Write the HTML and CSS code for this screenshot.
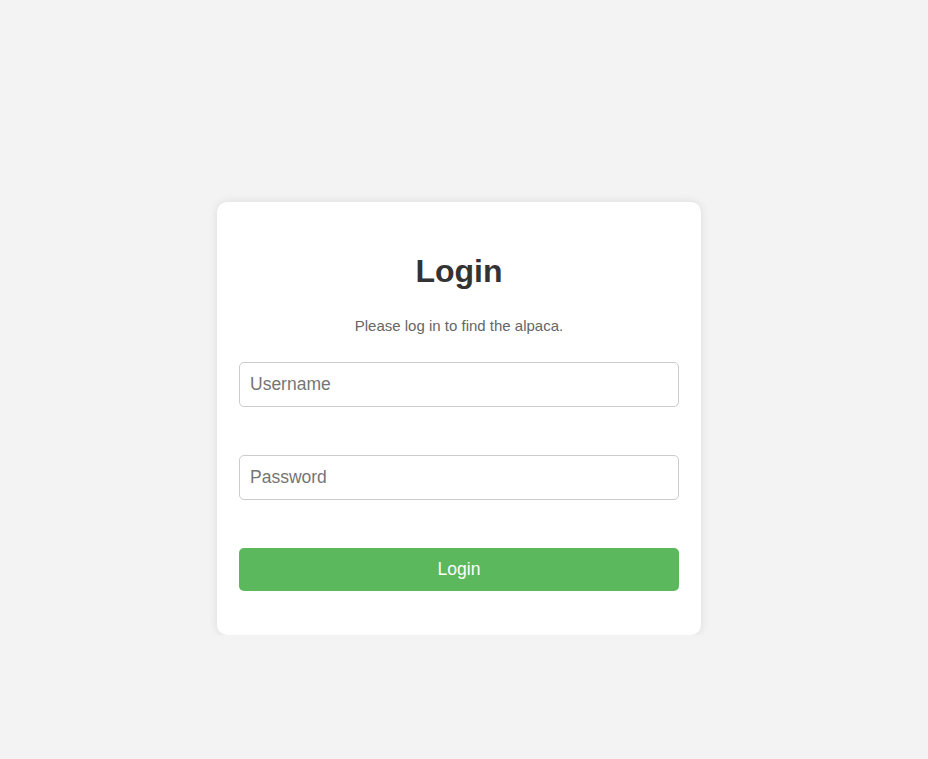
FILE: index.html
```html
<!DOCTYPE html>
<html lang="en">
<head>
  <meta charset="UTF-8">
  <meta name="viewport" content="width=device-width, initial-scale=1.0">
  <title>Login</title>
  <link rel="stylesheet" href="styles.css">
</head>
<body>
  <div class="login-box">
    <h1>Login</h1>
    <p class="hint">Please log in to find the alpaca.</p>
    <form id="loginForm">
      <input type="text" name="username" placeholder="Username">
      <input type="password" name="password" placeholder="Password">
      <button type="submit">Login</button>
    </form>
  </div>
</body>
</html>
```

FILE: styles.css
```css
body {
  margin: 0;
  padding-right: 10px;
  background-color: #f3f3f3;
  font-family: 'Liberation Sans', Arial, sans-serif;
}
.login-box {
  width: 440px;
  margin: 202px auto 0;
  padding: 30px 22px 44px;
  background-color: #fff;
  border-radius: 10px;
  box-shadow: 0 0 10px rgba(0, 0, 0, 0.1);
  text-align: center;
}
h1 {
  margin: 21px 0 27px;
  font-size: 32px;
  color: #333;
}
.hint {
  margin: 0 0 28px;
  font-size: 15px;
  color: #666;
}
form {
  display: flex;
  flex-direction: column;
  gap: 48px;
}
input[type="text"],
input[type="password"] {
  box-sizing: border-box;
  width: 100%;
  height: 45px;
  padding: 0 10px;
  border: 1px solid #ccc;
  border-radius: 5px;
  font-family: inherit;
  font-size: 17.5px;
  color: #333;
}
input::placeholder {
  color: #757575;
}
button {
  height: 43px;
  background-color: #5cb85c;
  color: #fff;
  border: none;
  border-radius: 5px;
  font-family: inherit;
  font-size: 17.5px;
  cursor: pointer;
}
button:hover {
  background-color: #4cae4c;
}
```
